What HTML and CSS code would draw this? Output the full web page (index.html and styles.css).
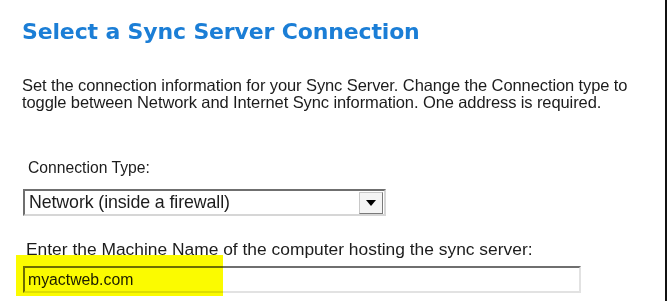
FILE: index.html
```html
<!DOCTYPE html>
<html lang="en">
<head>
    <meta charset="UTF-8">
    <meta name="viewport" content="width=device-width, initial-scale=1.0">
    <title>Sync Server Connection</title>
    <link rel="stylesheet" href="styles.css">
</head>
<body>
<div class="window">
    <div class="panel">
        <h1 class="title">Select a Sync Server Connection</h1>
        <p class="intro">Set the connection information for your Sync Server. Change the Connection type to<br>toggle between Network and Internet Sync information. One address is required.</p>

        <div class="field field-type">
            <label class="names" for="connType">Connection Type:</label>
            <div class="combo" id="connType">
                <span class="combo-text">Network (inside a firewall)</span>
                <span class="combo-btn"><span class="arrow"></span></span>
            </div>
        </div>

        <div class="field field-machine">
            <label class="names" for="machine">Enter the Machine Name of the computer hosting the sync server:</label>
            <input type="text" id="machine" class="textbox" value="myactweb.com">
            <div class="highlight"></div>
        </div>
    </div>
    <div class="edge"></div>
</div>
</body>
</html>
```

FILE: styles.css
```css
/* Reset */
* {
  box-sizing: border-box;
  margin: 0;
  padding: 0;
}

body {
  font-family: 'Liberation Sans', Arial, sans-serif;
  background: #fff;
  color: #1c1c1c;
}

/* Window */
.window {
  display: flex;
  width: 667px;
  height: 301px;
}

.panel {
  flex: 1;
  padding: 19px 0 0 22px;
}

.edge {
  width: 2px;
  background: #111;
}

/* Title */
.title {
  font-family: 'DejaVu Sans', Verdana, sans-serif;
  font-size: 22px;
  line-height: 26px;
  font-weight: bold;
  color: #1b7ed6;
  letter-spacing: -0.15px;
}

/* Intro text */
.intro {
  margin-top: 32px;
  font-size: 16.5px;
  line-height: 17px;
  letter-spacing: -0.1px;
}

/* Fields */
.field-type {
  margin-top: 48px;
}

.field-type .names {
  padding-left: 6px;
  font-size: 15.7px;
}

.field-machine {
  position: relative;
  margin-top: 25px;
}

.field-machine .names {
  padding-left: 4px;
  font-size: 17.4px;
}

.names {
  display: block;
  line-height: 17px;
}

/* Combo box */
.combo {
  display: flex;
  align-items: center;
  width: 363px;
  height: 27px;
  margin-top: 13px;
  margin-left: 1px;
  border-top: 2px solid #6f6f6f;
  border-left: 2px solid #6f6f6f;
  border-right: 2px solid #d6d6d6;
  border-bottom: 2px solid #d6d6d6;
  background: #fff;
}

.combo-text {
  flex: 1;
  padding-left: 4px;
  font-size: 17.8px;
  letter-spacing: -0.1px;
}

.combo-btn {
  display: flex;
  align-items: center;
  justify-content: center;
  width: 24px;
  height: 22px;
  margin-right: 1px;
  border: 1px solid #c8c8c8;
  border-right-color: #7a7a7a;
  border-bottom-color: #7a7a7a;
  background: #f4f4f4;
}

.arrow {
  width: 0;
  height: 0;
  border-left: 5px solid transparent;
  border-right: 5px solid transparent;
  border-top: 6px solid #000;
}

/* Text box */
.textbox {
  display: block;
  width: 558px;
  height: 27px;
  margin-top: 8px;
  margin-left: 1px;
  padding-left: 3px;
  border-top: 2px solid #6f6f6f;
  border-left: 2px solid #6f6f6f;
  border-right: 2px solid #e2e2e2;
  border-bottom: 2px solid #e2e2e2;
  font-family: 'Liberation Sans', Arial, sans-serif;
  font-size: 15.8px;
  color: #1c1c1c;
  background: #fff;
  outline: none;
}

/* Yellow marker over the machine name */
.highlight {
  position: absolute;
  left: -6px;
  top: 14px;
  width: 207px;
  height: 41px;
  background: #fbfb00;
  mix-blend-mode: multiply;
}
```
